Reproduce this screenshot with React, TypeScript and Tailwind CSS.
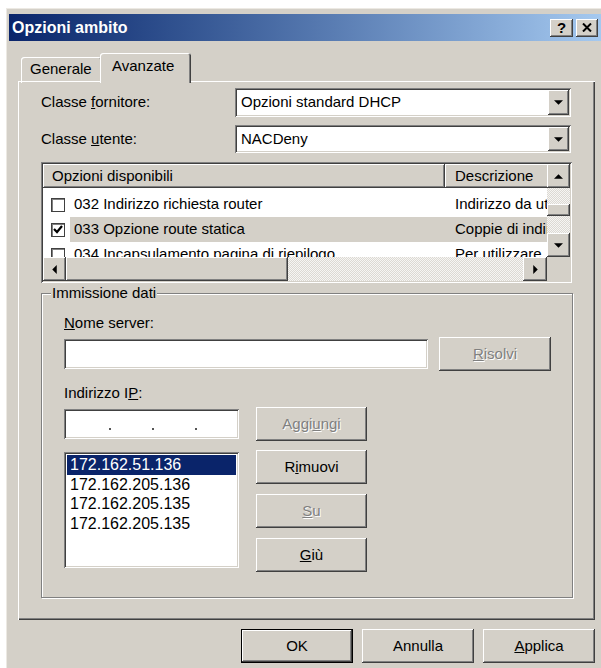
import type { ReactNode } from 'react';

// Win2000 bevels
const raised =
  'shadow-[inset_-1px_-1px_#404040,inset_1px_1px_#ffffff,inset_-2px_-2px_#808080,inset_2px_2px_#d4d0c8]';
const sunken =
  'shadow-[inset_1px_1px_#808080,inset_-1px_-1px_#ffffff,inset_2px_2px_#404040,inset_-2px_-2px_#d4d0c8]';
const dither =
  'bg-[image:repeating-conic-gradient(#f6f5f3_0_25%,#dcd9d3_0_50%)] bg-[length:2px_2px]';
const disabledText = 'text-[#808080] [text-shadow:1px_1px_0_#ffffff]';

function Arrow({ dir }: { dir: 'up' | 'down' | 'left' | 'right' }) {
  const pts = {
    up: '0,4 4,0 8,4',
    down: '0,0 8,0 4,4',
    left: '4,0 4,8 0,4',
    right: '0,0 0,8 4,4',
  }[dir];
  const vertical = dir === 'up' || dir === 'down';
  return (
    <svg width={vertical ? 9 : 5} height={vertical ? 5 : 9} viewBox={vertical ? '0 0 8 4' : '0 0 4 8'}>
      <polygon points={pts} fill="#000" />
    </svg>
  );
}

function ScrollBtn({ dir, className }: { dir: 'up' | 'down' | 'left' | 'right'; className: string }) {
  return (
    <div className={`bg-[#d4d0c8] ${raised} flex items-center justify-center shrink-0 ${className}`}>
      <Arrow dir={dir} />
    </div>
  );
}

function Button({
  children,
  className = '',
  disabled = false,
  primary = false,
}: {
  children: ReactNode;
  className?: string;
  disabled?: boolean;
  primary?: boolean;
}) {
  return (
    <div
      className={`h-[34px] bg-[#d4d0c8] flex items-center justify-center text-[15px] shrink-0 ${
        primary ? 'border border-black' : ''
      } ${raised} ${disabled ? disabledText : 'text-black'} ${className}`}
    >
      {children}
    </div>
  );
}

function Combo({ value, className }: { value: string; className: string }) {
  return (
    <div className={`bg-white ${sunken} flex items-center pl-[6px] pr-[2px] ${className}`}>
      <span className="flex-1 text-[15px]">{value}</span>
      <ScrollBtn dir="down" className="w-[21px] h-[calc(100%-4px)]" />
    </div>
  );
}

function CheckBox({ checked }: { checked?: boolean }) {
  return (
    <div className="w-[14px] h-[14px] bg-white border border-[#404040] shadow-[inset_1px_1px_#808080] flex items-center justify-center shrink-0">
      {checked && (
        <svg width="10" height="9" viewBox="0 0 10 9">
          <polyline points="1,4 4,7 9,1" fill="none" stroke="#000" strokeWidth="2.2" />
        </svg>
      )}
    </div>
  );
}

const options = [
  { code: '032 Indirizzo richiesta router', desc: 'Indirizzo da utilizzare', checked: false, selected: false },
  { code: '033 Opzione route statica', desc: 'Coppie di indirizzi', checked: true, selected: true },
  { code: '034 Incapsulamento pagina di riepilogo', desc: 'Per utilizzare', checked: false, selected: false },
];

function OptionsList() {
  return (
    <div className={`w-[531px] h-[121px] bg-white ${sunken} p-[2px] flex flex-col`}>
      <div className="flex h-[93px]">
        <div className="w-[504px] h-[93px] overflow-hidden">
          <div className="flex h-[24px] w-[700px]">
            <div className={`w-[402px] bg-[#d4d0c8] ${raised} pl-[9px] flex items-center`}>Opzioni disponibili</div>
            <div className={`w-[298px] bg-[#d4d0c8] ${raised} pl-[10px] flex items-center`}>Descrizione</div>
          </div>
          <div className="pt-[4px]">
            {options.map((o) => (
              <div key={o.code} className="flex h-[25px] items-center w-[700px]">
                <div className="w-[27px] pl-[8px] flex items-center">
                  <CheckBox checked={o.checked} />
                </div>
                <div className={`flex h-full items-center ${o.selected ? 'bg-[#d4d0c8]' : ''}`}>
                  <div className="w-[375px] pl-[4px] whitespace-nowrap overflow-hidden">{o.code}</div>
                  <div className="w-[298px] pl-[10px] whitespace-nowrap">{o.desc}</div>
                </div>
              </div>
            ))}
          </div>
        </div>
        <div className={`w-[23px] h-[93px] flex flex-col ${dither}`}>
          <ScrollBtn dir="up" className="h-[24px] w-[23px]" />
          <div className="h-[16px]" />
          <div className={`h-[12px] bg-[#d4d0c8] ${raised}`} />
          <div className="flex-1" />
          <ScrollBtn dir="down" className="h-[24px] w-[23px]" />
        </div>
      </div>
      <div className="flex h-[24px]">
        <ScrollBtn dir="left" className="w-[23px] h-[24px]" />
        <div className={`w-[222px] h-[24px] bg-[#d4d0c8] ${raised}`} />
        <div className={`flex-1 ${dither}`} />
        <ScrollBtn dir="right" className="w-[24px] h-[24px]" />
        <div className="w-[23px] bg-[#d4d0c8]" />
      </div>
    </div>
  );
}

const ips = ['172.162.51.136', '172.162.205.136', '172.162.205.135', '172.162.205.135'];

function DataEntry() {
  return (
    <fieldset className="mt-[1px] w-[532px] h-[314px] border border-[#808080] shadow-[inset_1px_1px_#ffffff,1px_1px_#ffffff] pl-[22px]">
      <legend className="-ml-[13px] px-[1px] h-[18px] leading-[18px] bg-[#d4d0c8]">Immissione dati</legend>
      <div className="mt-[12px] h-[18px] leading-[18px]">
        <span className="underline">N</span>ome server:
      </div>
      <div className="mt-[5px] flex items-center gap-[11px] h-[34px]">
        <div className={`w-[364px] h-[30px] bg-white ${sunken}`} />
        <Button disabled className="w-[112px]">
          <span className="underline">R</span>isolvi
        </Button>
      </div>
      <div className="mt-[13px] h-[18px] leading-[18px]">
        Indirizzo I<span className="underline">P</span>:
      </div>
      <div className="mt-[5px] flex items-center gap-[17px] h-[34px]">
        {/* IP address field: four empty octets with separators */}
        <div className={`w-[175px] h-[30px] bg-white ${sunken} flex items-end pb-[9px] pl-[6px]`}>
          <span className="w-[39px]" />
          <span className="w-[2px] h-[2px] bg-[#555] mr-[2px]" />
          <span className="w-[39px]" />
          <span className="w-[2px] h-[2px] bg-[#555] mr-[2px]" />
          <span className="w-[39px]" />
          <span className="w-[2px] h-[2px] bg-[#555] mr-[2px]" />
        </div>
        <Button disabled className="w-[111px]">
          Aggi<span className="underline">u</span>ngi
        </Button>
      </div>
      <div className="mt-[9px] flex gap-[17px]">
        <div className={`mt-[2px] w-[175px] h-[116px] bg-white ${sunken} p-[3px] text-[16px]`}>
          {ips.map((ip, i) => (
            <div
              key={i}
              className={`h-[19.6px] leading-[19.6px] pl-[3px] ${i === 0 ? 'bg-[#0a246a] text-white' : 'text-black'}`}
            >
              {ip}
            </div>
          ))}
        </div>
        <div className="flex flex-col gap-[10px]">
          <Button className="w-[111px]">
            R<span className="underline">i</span>muovi
          </Button>
          <Button disabled className="w-[111px]">
            <span className="underline">S</span>u
          </Button>
          <Button className="w-[111px]">
            <span className="underline">G</span>iù
          </Button>
        </div>
      </div>
    </fieldset>
  );
}

export default function App() {
  return (
    <div className="w-[601px] h-[668px] overflow-hidden bg-white font-['Liberation_Sans',Arial,sans-serif] text-[15px] text-black">
      <div className="ml-[6px] mt-[8px] w-[600px] h-[680px] bg-[#d4d0c8] shadow-[inset_1px_1px_#ece9e3] pt-[6px] px-[3px]">
        {/* title bar */}
        <div className="h-[27px] bg-gradient-to-r from-[#0a246a] to-[#a6caf0] flex items-center pl-[3px] pr-[5px]">
          <span className="flex-1 text-white font-bold text-[16px]">Opzioni ambito</span>
          <div className={`w-[23px] h-[18px] bg-[#d4d0c8] ${raised} flex items-center justify-center font-bold text-[15px] leading-none`}>
            ?
          </div>
          <div className={`ml-[3px] w-[22px] h-[18px] bg-[#d4d0c8] ${raised} flex items-center justify-center`}>
            <svg width="10" height="9" viewBox="0 0 10 9">
              <path d="M1 0.5 L9 8.5 M9 0.5 L1 8.5" stroke="#000" strokeWidth="2" />
            </svg>
          </div>
        </div>

        {/* tabs */}
        <div className="ml-[9px] mt-[12px] flex items-end h-[30px] relative z-10 -mb-[2px]">
          <div className="ml-[3px] w-[81px] h-[26px] pb-[2px] rounded-t-[3px] shadow-[inset_1px_1px_#ffffff,inset_-1px_0_#404040,inset_-2px_0_#808080] flex items-center pl-[9px]">
            Generale
          </div>
          <div className="-ml-[2px] w-[91px] h-[30px] pb-[4px] bg-[#d4d0c8] rounded-t-[3px] shadow-[inset_1px_1px_#ffffff,inset_-1px_0_#404040,inset_-2px_0_#808080] flex items-center pl-[12px]">
            Avanzate
          </div>
        </div>

        {/* tab page */}
        <div className="ml-[9px] w-[577px] h-[539px] pt-[7px] px-[23px] shadow-[inset_1px_1px_#ffffff,inset_-1px_-1px_#404040,inset_-2px_-2px_#808080]">
          <div className="flex items-center h-[29px]">
            <div className="w-[194px]">
              Classe <span className="underline">f</span>ornitore:
            </div>
            <Combo value="Opzioni standard DHCP" className="w-[336px] h-[29px]" />
          </div>
          <div className="mt-[8px] flex items-center h-[28px]">
            <div className="w-[194px]">
              Classe <span className="underline">u</span>tente:
            </div>
            <Combo value="NACDeny" className="w-[336px] h-[28px]" />
          </div>
          <div className="mt-[9px]">
            <OptionsList />
          </div>
          <DataEntry />
        </div>

        {/* dialog buttons */}
        <div className="ml-[9px] mt-[9px] w-[577px] flex justify-end gap-[9px]">
          <Button primary className="w-[112px]">
            OK
          </Button>
          <Button className="w-[112px]">Annulla</Button>
          <Button className="w-[112px]">
            <span className="underline">A</span>pplica
          </Button>
        </div>
      </div>
    </div>
  );
}
